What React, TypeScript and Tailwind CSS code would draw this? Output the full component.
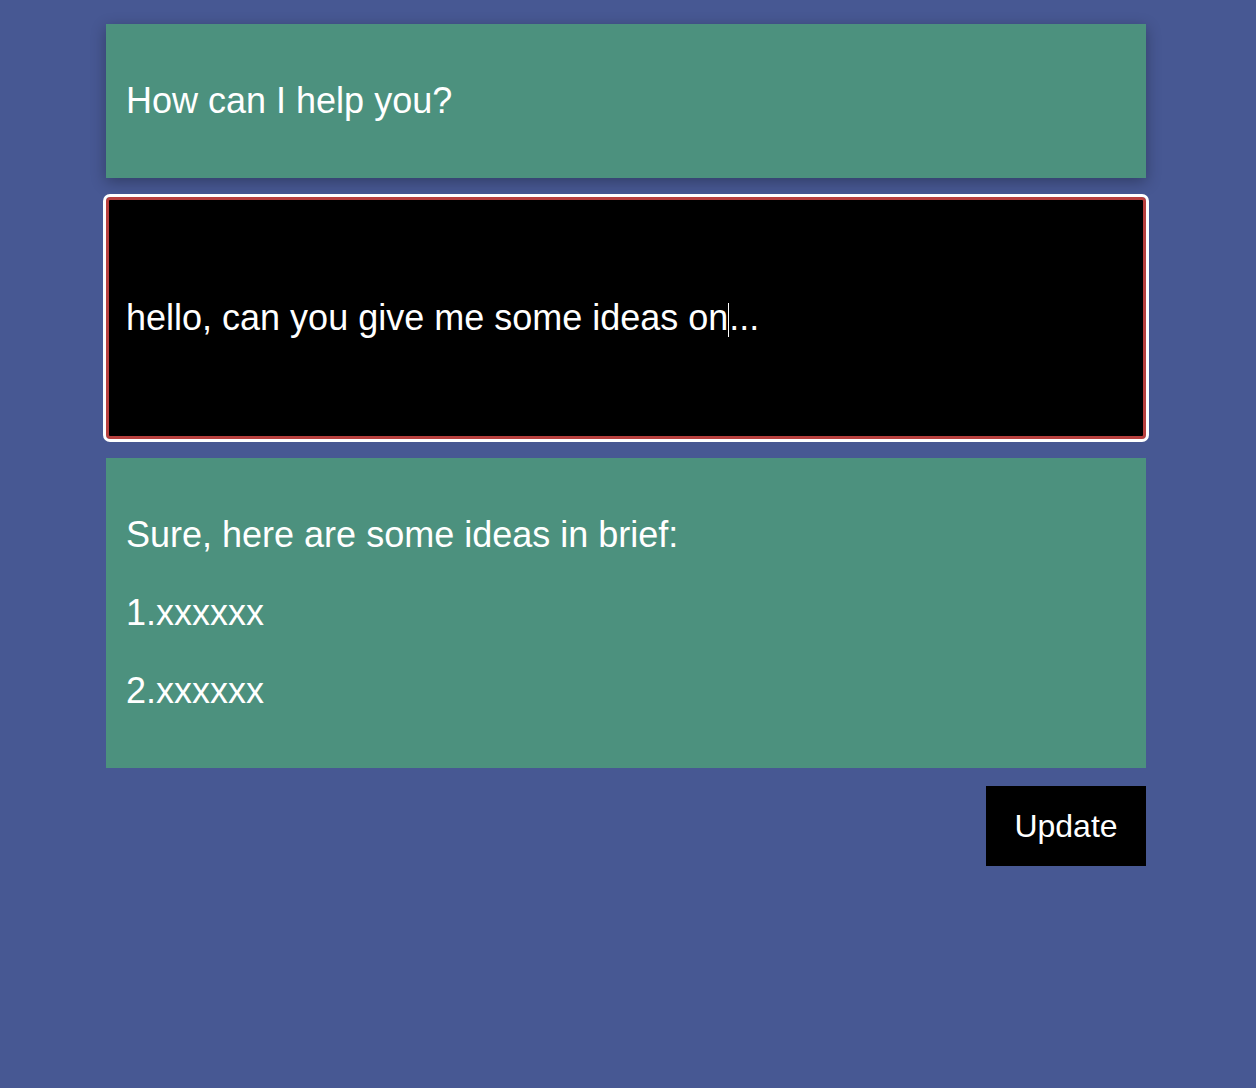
import React from "react";

const ideas = ["Sure, here are some ideas in brief:", "1.xxxxxx", "2.xxxxxx"];

const App: React.FC = () => {
  return (
    <div
      className="min-h-screen bg-[#475893] pt-6 pl-[106px] text-white"
      style={{ fontFamily: '"Liberation Sans", Arial, sans-serif' }}
    >
      <div className="w-[1040px] flex flex-col">
        {/* Question */}
        <div className="bg-[#4c917e] px-5 py-5 shadow-[0_4px_14px_rgba(0,0,0,0.3)]">
          <p className="my-9 text-[36px] leading-[42px]">How can I help you?</p>
        </div>

        {/* Input */}
        <div className="mt-[19px] h-[242px] rounded-[4px] border-[3px] border-[#b8403e] bg-black px-[17px] flex items-center outline-[3px] outline-white">
          <p className="text-[36px] leading-[42px] whitespace-nowrap">
            hello, can you give me some ideas on
            <span className="inline-block w-px h-[34px] bg-white align-[-7px]" />
            ...
          </p>
        </div>

        {/* Answer */}
        <div className="mt-[19px] bg-[#4c917e] px-5 py-5">
          {ideas.map((line, i) => (
            <p key={i} className="my-9 text-[36px] leading-[42px]">
              {line}
            </p>
          ))}
        </div>

        <div className="mt-[18px] flex justify-end">
          <button className="w-[160px] h-[80px] bg-black text-white text-[32px]">
            Update
          </button>
        </div>
      </div>
    </div>
  );
};

export default App;
